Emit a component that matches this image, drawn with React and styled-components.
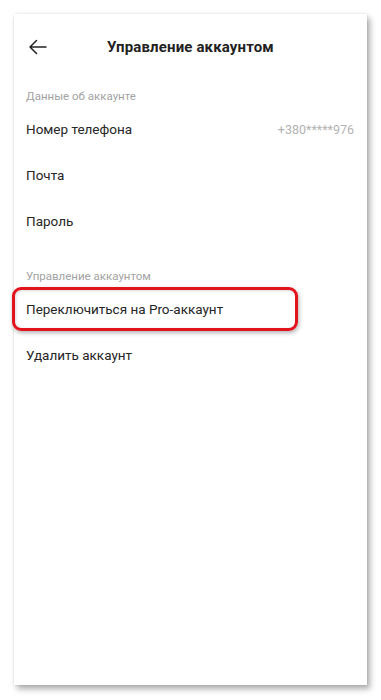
import React from "react";
import styled, { createGlobalStyle } from "styled-components";

const GlobalStyle = createGlobalStyle`
  html, body {
    margin: 0;
    padding: 0;
    background: #ffffff;
  }
  body {
    font-family: Roboto, "Noto Sans", "Liberation Sans", sans-serif;
    color: #222222;
  }
`;

const Page = styled.div`
  width: 381px;
  height: 700px;
  padding: 14px 0 0 14px;
  box-sizing: border-box;
`;

const Card = styled.div`
  width: 353px;
  height: 671px;
  background: #ffffff;
  box-shadow: 3px 4px 6px rgba(0, 0, 0, 0.32), 0 0 2px rgba(0, 0, 0, 0.12);
  display: flex;
  flex-direction: column;
`;

const Header = styled.header`
  height: 66px;
  display: grid;
  grid-template-columns: 1fr auto 1fr;
  align-items: center;
  padding: 0 14px;
`;

const BackButton = styled.div`
  display: flex;
  align-items: center;
  width: 20px;
  height: 20px;
  color: #222222;
`;

const Title = styled.h1`
  margin: 0;
  font-size: 15px;
  font-weight: 700;
  color: #222222;
  letter-spacing: 0.15px;
`;

const SectionLabel = styled.div`
  padding: ${(p) => p.$top}px 12px 0;
  font-size: 11.5px;
  line-height: 20px;
  color: #a3a3a3;
`;

const Row = styled.div`
  position: relative;
  height: 46px;
  display: flex;
  align-items: center;
  justify-content: space-between;
  padding: 0 13px 0 12px;
  font-size: 13.5px;
  color: #262626;
`;

const Value = styled.span`
  font-size: 12.5px;
  color: #b3b3b3;
`;

const Highlight = styled.div`
  position: absolute;
  left: -2px;
  top: 1px;
  width: 286px;
  height: 44px;
  box-sizing: border-box;
  border: 3px solid #e2131d;
  border-radius: 9px;
  box-shadow: 1px 2px 4px rgba(0, 0, 0, 0.3), inset 1px 1px 3px rgba(0, 0, 0, 0.15);
  pointer-events: none;
`;

function ArrowLeft() {
  return (
    <svg width="19" height="16" viewBox="0 0 19 16" fill="none">
      <path
        d="M18 8H2M8.5 1.5L2 8l6.5 6.5"
        stroke="currentColor"
        strokeWidth="1.5"
        strokeLinecap="round"
        strokeLinejoin="round"
      />
    </svg>
  );
}

export default function App() {
  return (
    <>
      <GlobalStyle />
      <Page>
        <Card>
          <Header>
            <BackButton>
              <ArrowLeft />
            </BackButton>
            <Title>Управление аккаунтом</Title>
            <span />
          </Header>

          <SectionLabel $top={6}>Данные об аккаунте</SectionLabel>
          <Row>
            Номер телефона
            <Value>+380*****976</Value>
          </Row>
          <Row>Почта</Row>
          <Row>Пароль</Row>

          <SectionLabel $top={22}>Управление аккаунтом</SectionLabel>
          <Row>
            Переключиться на Pro-аккаунт
            <Highlight />
          </Row>
          <Row>Удалить аккаунт</Row>
        </Card>
      </Page>
    </>
  );
}
